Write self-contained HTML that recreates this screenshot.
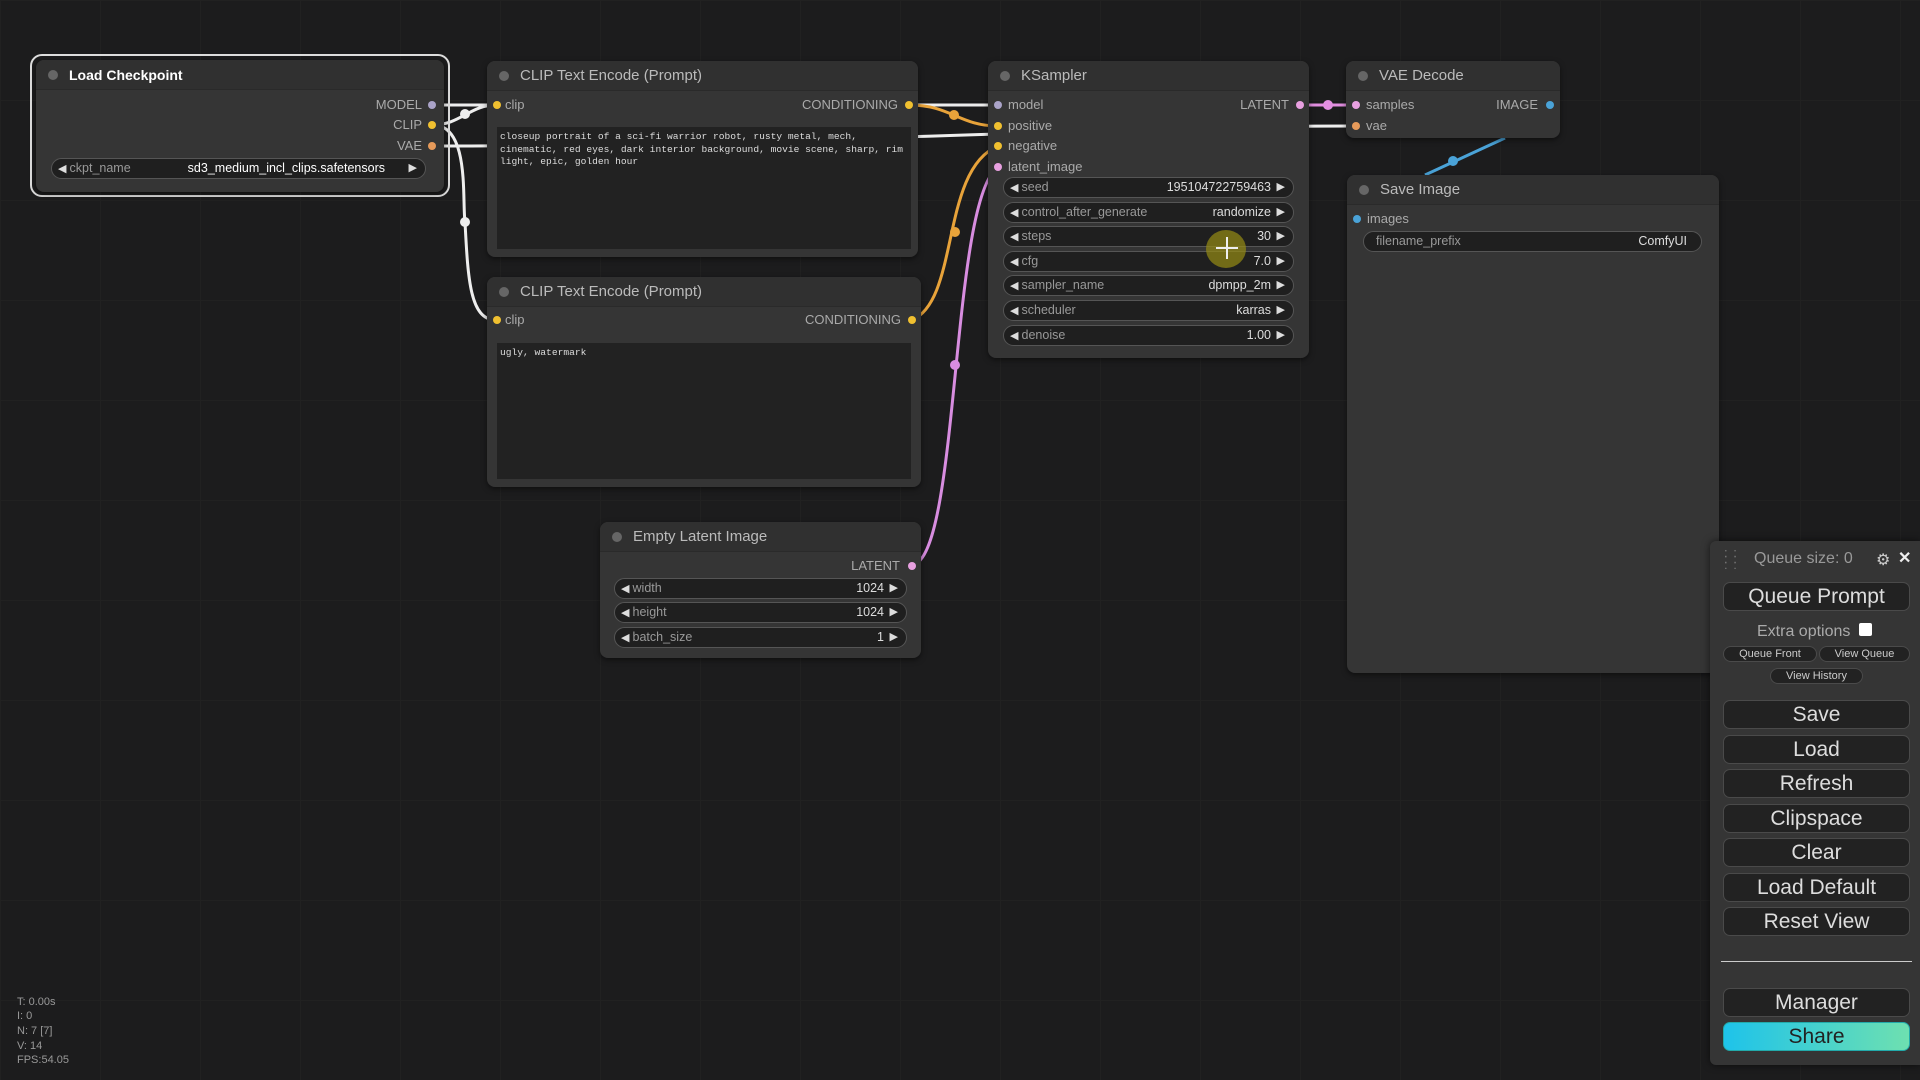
<!DOCTYPE html>
<html><head><meta charset="utf-8"><style>
*{box-sizing:border-box;margin:0;padding:0}
body{width:1920px;height:1080px;overflow:hidden;background:#1c1c1d;font-family:"Liberation Sans",sans-serif;position:relative;
background-image:linear-gradient(#212121 1px,transparent 1px),linear-gradient(90deg,#212121 1px,transparent 1px);background-size:100px 100px}
.n{position:absolute;background:#353535;border-radius:8px;box-shadow:0 2px 6px rgba(0,0,0,.5)}
.t{height:30px;background:#303030;border-radius:8px 8px 0 0;border-bottom:1px solid #2a2a2a;color:#bbb;font-size:15px;line-height:30px;padding-left:33px;position:relative}
.t:before{content:"";position:absolute;left:12px;top:10px;width:10px;height:10px;border-radius:50%;background:#666}
.a{position:absolute;font-size:13px;color:#aaa;line-height:16px}
.d{position:absolute;width:8px;height:8px;border-radius:50%}
.w{position:absolute;height:21px;border:1px solid #555;background:#1f1f1f;border-radius:11px;font-size:12.5px;line-height:19px;color:#999}
.w .l{position:absolute;left:6px}
.w .l:before{content:"◀ ";color:#ddd;font-size:11px}
.w .v{position:absolute;right:22px;color:#ddd}
.w .r{position:absolute;right:8px;color:#ddd;font-size:11px}
.ta{position:absolute;background:#222;font-family:"Liberation Mono",monospace;font-size:9.6px;color:#ddd;padding:4px 3px;line-height:12.5px}
.btn{position:absolute;left:1723px;width:187px;height:29px;border:1px solid #4a4a4a;background:#222;border-radius:7px;color:#ddd;font-size:21px;text-align:center;line-height:27px}
.sb{position:absolute;height:16px;border:1px solid #4a4a4a;background:#222;border-radius:8px;color:#ccc;font-size:11px;text-align:center;line-height:14px}
.st{position:absolute;left:17px;color:#999;font-size:11px}
</style></head><body>

<svg width="1920" height="1080" style="position:absolute;left:0;top:0">
<g fill="none" stroke-width="3">
<path d="M433,105 C600,105 840,105 998,105" stroke="#eee"/>
<path d="M433,125 C460,125 470,105 496,105" stroke="#eee"/>
<path d="M433,125 C470,125 462,200 465,222 C468,280 470,320 496,320" stroke="#eee"/>
<path d="M433,146 C800,146 1100,126 1356,126" stroke="#eee"/>
<path d="M910,105 C950,105 960,126 998,126" stroke="#e8a33a"/>
<path d="M912,320 C960,300 940,170 998,146" stroke="#e8a33a"/>
<path d="M912,565 C960,560 950,200 998,167" stroke="#d88de0"/>
<path d="M1301,105 L1356,105" stroke="#e28fe0"/>
<path d="M1505,138 L1425,175" stroke="#4aa3d8"/>
</g>
<circle cx="465" cy="222" r="5" fill="#eee"/><circle cx="465" cy="114" r="5" fill="#eee"/>
<circle cx="954" cy="115" r="5" fill="#e8a33a"/><circle cx="955" cy="232" r="5" fill="#e8a33a"/>
<circle cx="955" cy="365" r="5" fill="#d88de0"/><circle cx="1328" cy="105" r="5" fill="#e28fe0"/>
<circle cx="1453" cy="161" r="5" fill="#4aa3d8"/>
</svg>

<div style="position:absolute;left:30px;top:54px;width:420px;height:143px;border:2px solid #ddd;border-radius:12px"></div>
<div class="n" style="left:36px;top:60px;width:408px;height:132px">
<div class="t" style="color:#fff;font-weight:bold;font-size:14px">Load Checkpoint</div>
<div class="a" style="right:22px;top:37px">MODEL</div><div class="d" style="right:8px;top:41px;background:#aaa3c8"></div>
<div class="a" style="right:22px;top:57px">CLIP</div><div class="d" style="right:8px;top:61px;background:#f0c030"></div>
<div class="a" style="right:22px;top:78px">VAE</div><div class="d" style="right:8px;top:82px;background:#e69a5a"></div>
<div class="w" style="left:15px;top:98px;width:375px"><span class="l">ckpt_name</span><span class="v" style="right:40px;color:#fff">sd3_medium_incl_clips.safetensors</span><span class="r">▶</span></div>
</div>

<div class="n" style="left:487px;top:61px;width:431px;height:196px">
<div class="t">CLIP Text Encode (Prompt)</div>
<div class="d" style="left:6px;top:40px;background:#f0c030"></div><div class="a" style="left:18px;top:36px">clip</div>
<div class="a" style="right:20px;top:36px">CONDITIONING</div><div class="d" style="right:5px;top:40px;background:#f0c030"></div>
<div class="ta" style="left:10px;top:66px;width:414px;height:122px">closeup portrait of a sci-fi warrior robot, rusty metal, mech, cinematic, red eyes, dark interior background, movie scene, sharp, rim light, epic, golden hour</div>
</div>

<div class="n" style="left:487px;top:277px;width:434px;height:210px">
<div class="t">CLIP Text Encode (Prompt)</div>
<div class="d" style="left:6px;top:39px;background:#f0c030"></div><div class="a" style="left:18px;top:35px">clip</div>
<div class="a" style="right:20px;top:35px">CONDITIONING</div><div class="d" style="right:5px;top:39px;background:#f0c030"></div>
<div class="ta" style="left:10px;top:66px;width:414px;height:136px">ugly, watermark</div>
</div>

<div class="n" style="left:600px;top:522px;width:321px;height:136px">
<div class="t">Empty Latent Image</div>
<div class="a" style="right:21px;top:36px">LATENT</div><div class="d" style="right:5px;top:40px;background:#e8a0e0"></div>
<div class="w" style="left:14px;top:56px;width:293px"><span class="l">width</span><span class="v">1024</span><span class="r">▶</span></div>
<div class="w" style="left:14px;top:80px;width:293px"><span class="l">height</span><span class="v">1024</span><span class="r">▶</span></div>
<div class="w" style="left:14px;top:105px;width:293px"><span class="l">batch_size</span><span class="v">1</span><span class="r">▶</span></div>
</div>

<div class="n" style="left:988px;top:61px;width:321px;height:297px">
<div class="t">KSampler</div>
<div class="d" style="left:6px;top:40px;background:#aaa3c8"></div><div class="a" style="left:20px;top:36px">model</div>
<div class="a" style="right:20px;top:36px">LATENT</div><div class="d" style="right:5px;top:40px;background:#e8a0e0"></div>
<div class="d" style="left:6px;top:61px;background:#f0c030"></div><div class="a" style="left:20px;top:57px">positive</div>
<div class="d" style="left:6px;top:81px;background:#f0c030"></div><div class="a" style="left:20px;top:77px">negative</div>
<div class="d" style="left:6px;top:102px;background:#e8a0e0"></div><div class="a" style="left:20px;top:98px">latent_image</div>
<div class="w" style="left:15px;top:116px;width:291px"><span class="l">seed</span><span class="v">195104722759463</span><span class="r">▶</span></div>
<div class="w" style="left:15px;top:141px;width:291px"><span class="l">control_after_generate</span><span class="v">randomize</span><span class="r">▶</span></div>
<div class="w" style="left:15px;top:165px;width:291px"><span class="l">steps</span><span class="v">30</span><span class="r">▶</span></div>
<div class="w" style="left:15px;top:190px;width:291px"><span class="l">cfg</span><span class="v">7.0</span><span class="r">▶</span></div>
<div class="w" style="left:15px;top:214px;width:291px"><span class="l">sampler_name</span><span class="v">dpmpp_2m</span><span class="r">▶</span></div>
<div class="w" style="left:15px;top:239px;width:291px"><span class="l">scheduler</span><span class="v">karras</span><span class="r">▶</span></div>
<div class="w" style="left:15px;top:264px;width:291px"><span class="l">denoise</span><span class="v">1.00</span><span class="r">▶</span></div>
</div>
<div style="position:absolute;left:1206px;top:230px;width:40px;height:38px;border-radius:50%;background:rgba(150,140,20,.7)"></div>
<div style="position:absolute;left:1216px;top:247px;width:22px;height:2px;background:#eee"></div>
<div style="position:absolute;left:1226px;top:237px;width:2px;height:22px;background:#eee"></div>

<div class="n" style="left:1346px;top:61px;width:214px;height:77px">
<div class="t">VAE Decode</div>
<div class="d" style="left:6px;top:40px;background:#e8a0e0"></div><div class="a" style="left:20px;top:36px">samples</div>
<div class="a" style="right:22px;top:36px">IMAGE</div><div class="d" style="right:6px;top:40px;background:#4aa3d8"></div>
<div class="d" style="left:6px;top:61px;background:#e69a5a"></div><div class="a" style="left:20px;top:57px">vae</div>
</div>

<div class="n" style="left:1347px;top:175px;width:372px;height:498px;border-radius:8px">
<div class="t">Save Image</div>
<div class="d" style="left:6px;top:40px;background:#4aa3d8"></div><div class="a" style="left:20px;top:36px">images</div>
<div class="w" style="left:16px;top:56px;width:339px"><span class="l" style="left:12px">filename_prefix</span><span class="v" style="right:14px">ComfyUI</span></div>
</div>
<style>.n .w .l[style]:before{content:""}</style>

<div style="position:absolute;left:1710px;top:541px;width:210px;height:524px;background:#353535;border-radius:6px 0 0 6px;box-shadow:0 0 8px rgba(0,0,0,.6)"></div>
<div style="position:absolute;left:1724px;top:550px;color:#777;font-size:13px;line-height:6px;letter-spacing:1px">: :<br>: :<br>: :</div>
<div style="position:absolute;left:1754px;top:550px;color:#999;font-size:16px">Queue size: 0</div>
<div style="position:absolute;left:1876px;top:550px;color:#ccc;font-size:16px">⚙</div>
<div style="position:absolute;left:1898px;top:548px;color:#eee;font-size:16px;font-weight:bold">✕</div>
<div class="btn" style="top:582px">Queue Prompt</div>
<div style="position:absolute;left:1757px;top:623px;color:#aaa;font-size:16px">Extra options</div>
<div style="position:absolute;left:1859px;top:623px;width:13px;height:13px;background:#fff;border-radius:2px"></div>
<div class="sb" style="left:1723px;top:646px;width:94px">Queue Front</div>
<div class="sb" style="left:1819px;top:646px;width:91px">View Queue</div>
<div class="sb" style="left:1770px;top:668px;width:93px">View History</div>
<div class="btn" style="top:700px">Save</div>
<div class="btn" style="top:735px">Load</div>
<div class="btn" style="top:769px">Refresh</div>
<div class="btn" style="top:804px">Clipspace</div>
<div class="btn" style="top:838px">Clear</div>
<div class="btn" style="top:873px">Load Default</div>
<div class="btn" style="top:907px">Reset View</div>
<div style="position:absolute;left:1721px;top:961px;width:191px;height:1px;background:#ccc"></div>
<div class="btn" style="top:988px">Manager</div>
<div class="btn" style="top:1022px;background:linear-gradient(90deg,#1ec3ea,#6ee0b0);color:#222;border-color:#2aa">Share</div>

<div class="st" style="top:996px">T: 0.00s</div>
<div class="st" style="top:1010px">I: 0</div>
<div class="st" style="top:1025px">N: 7 [7]</div>
<div class="st" style="top:1040px">V: 14</div>
<div class="st" style="top:1054px">FPS:54.05</div>
</body></html>
